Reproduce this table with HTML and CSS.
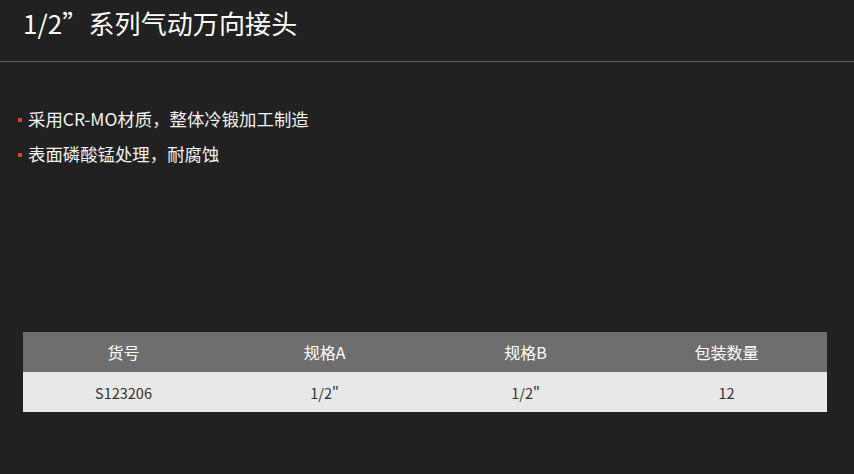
FILE: index.html
```html
<!DOCTYPE html>
<html lang="zh">
<head>
<meta charset="utf-8">
<link rel="stylesheet" href="styles.css">
</head>
<body>
<div class="page">
  <header class="head">
    <h1 class="title">1/2”系列气动万向接头</h1>
  </header>
  <ul class="features">
    <li>采用CR-MO材质，整体冷锻加工制造</li>
    <li>表面磷酸锰处理，耐腐蚀</li>
  </ul>
  <table class="spec">
    <thead>
      <tr><th>货号</th><th>规格A</th><th>规格B</th><th>包装数量</th></tr>
    </thead>
    <tbody>
      <tr><td>S123206</td><td>1/2"</td><td>1/2"</td><td>12</td></tr>
    </tbody>
  </table>
</div>
</body>
</html>
```
FILE: styles.css
```css
html, body {
  margin: 0;
  padding: 0;
  background: #212121;
}
body {
  font-family: "Noto Sans CJK SC", "Noto Sans", sans-serif;
  color: #fff;
  width: 854px;
  height: 474px;
  overflow: hidden;
}
.head {
  height: 61px;
  border-bottom: 1px solid #5e5e5e;
  box-sizing: content-box;
}
.title {
  margin: 0;
  padding: 5px 0 0 23px;
  font-size: 26px;
  font-weight: 400;
  line-height: 36px;
  letter-spacing: 0.1px;
}
.features {
  list-style: none;
  margin: 0;
  padding: 45px 0 0 18px;
}
.features li {
  position: relative;
  padding-left: 10px;
  font-size: 17.4px;
  line-height: 24px;
  margin-bottom: 11px;
  color: #f2f2f2;
}
.features li::before {
  content: "";
  position: absolute;
  left: 0;
  top: 11px;
  width: 4px;
  height: 4px;
  background: #d8442a;
}
.spec {
  margin: 166px 0 0 23px;
  width: 804px;
  border-collapse: collapse;
  table-layout: fixed;
}
.spec th {
  background: #6e6e6e;
  color: #fff;
  font-weight: 400;
  font-size: 16px;
  height: 40px;
  padding: 0;
  text-align: center;
}
.spec td {
  background: #e8e8e8;
  color: #333;
  font-size: 14.5px;
  height: 40px;
  padding: 0;
  text-align: center;
}
```
